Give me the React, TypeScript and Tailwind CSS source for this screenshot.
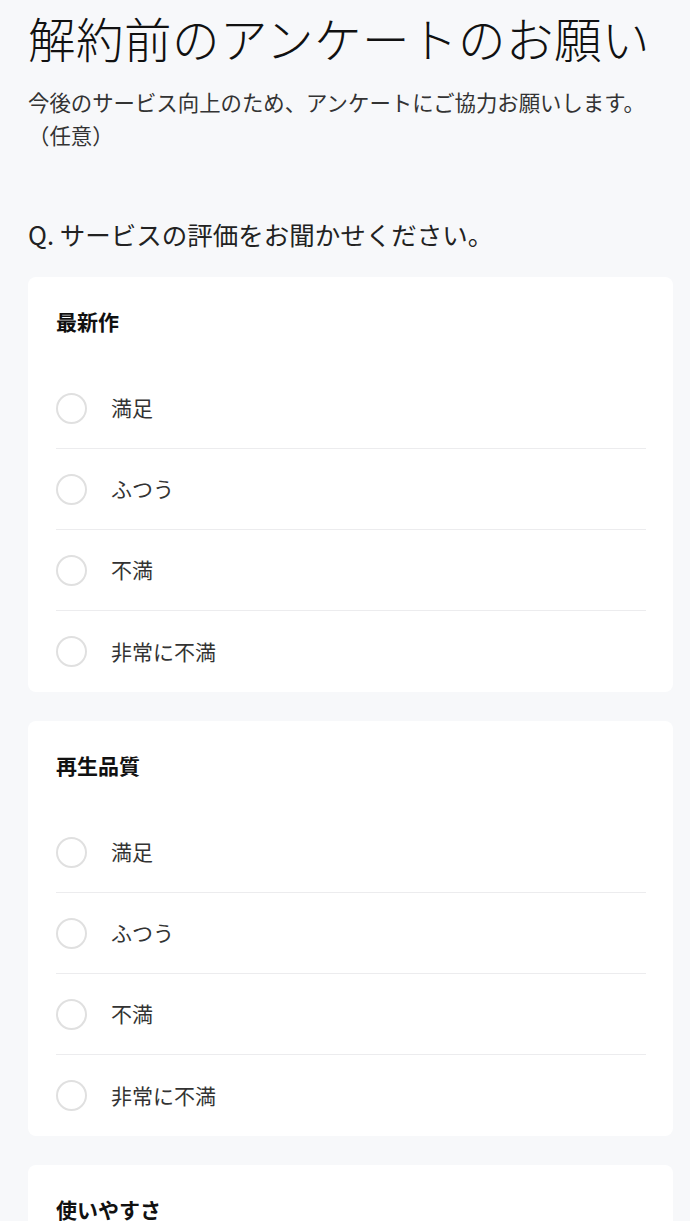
const options = ['満足', 'ふつう', '不満', '非常に不満'];

const sections = ['最新作', '再生品質', '使いやすさ'];

function RadioRow({ label, last }: { label: string; last: boolean }) {
    return (
        <label className={`flex items-center h-[81px] ${last ? '' : 'border-b border-[#ececee]'}`}>
            <span className="w-[31px] h-[31px] rounded-full border-2 border-[#e0e0e0] bg-white shrink-0" />
            <span className="ml-[24px] text-[21px] text-[#333333]">{label}</span>
        </label>
    );
}

export default function App() {
    return (
        <div
            className="min-h-screen bg-[#f7f8fa] pl-7 pr-[17px] pb-10"
            style={{ fontFamily: '"Noto Sans CJK JP", "Noto Sans", sans-serif' }}
        >
            <h1 className="pt-[7px] text-[47.5px] leading-[61px] font-light text-[#111111] tracking-[0.5px] whitespace-nowrap">
                解約前のアンケートのお願い
            </h1>
            <p className="mt-[17px] pr-[11px] text-[21.4px] leading-[33px] text-[#333333]">
                今後のサービス向上のため、アンケートにご協力お願いします。
                <br />
                （任意）
            </p>

            <h2 className="mt-[65px] text-[25.5px] leading-[36px] text-[#222222]">
                Q. サービスの評価をお聞かせください。
            </h2>

            <div className="mt-[25px] flex flex-col gap-[29px]">
                {sections.map((title) => (
                    <div key={title} className="bg-white rounded-[8px] pl-7 pr-[27px] pt-[26px]">
                        <h3 className="text-[21px] leading-[36px] font-bold text-[#111111]">{title}</h3>
                        <div className="mt-[29px]">
                            {options.map((opt, i) => (
                                <RadioRow key={opt} label={opt} last={i === options.length - 1} />
                            ))}
                        </div>
                    </div>
                ))}
            </div>
        </div>
    );
}
